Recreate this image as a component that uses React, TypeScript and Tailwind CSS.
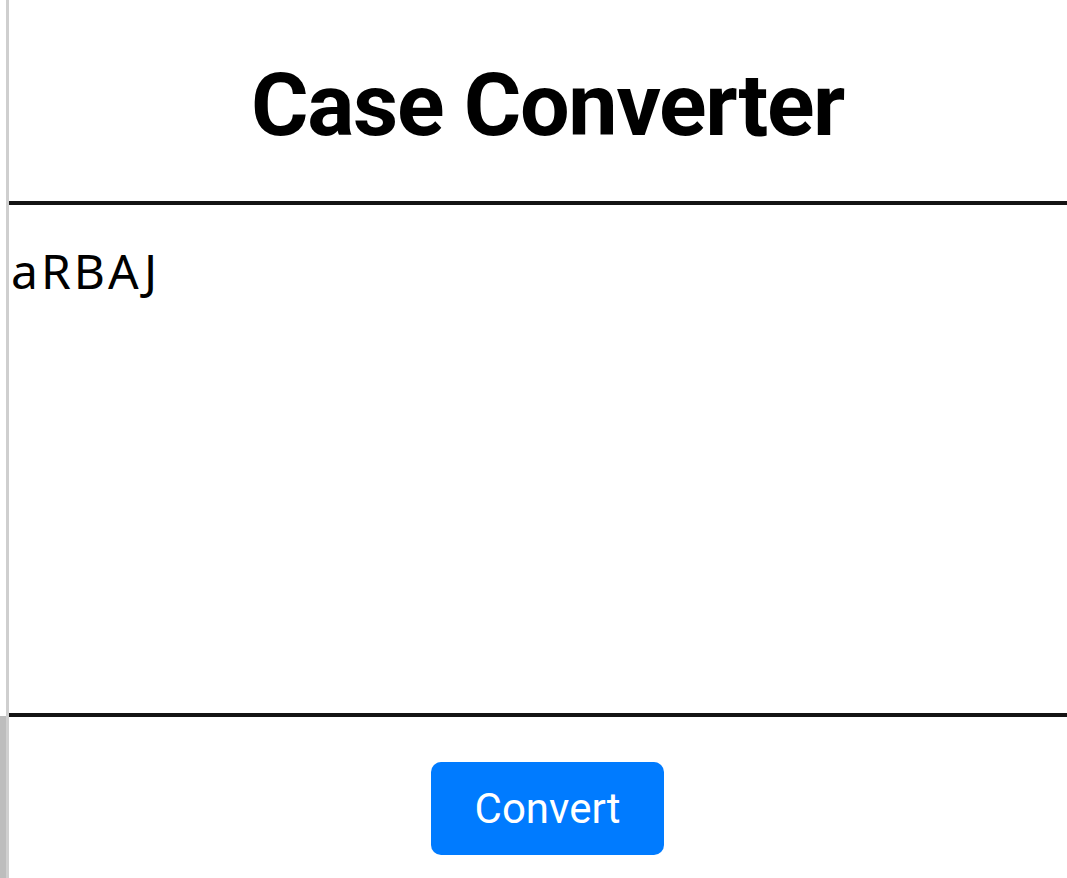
import { useState } from "react";

export default function App() {
  const [text, setText] = useState("aRBAJ");

  return (
    <div className="flex h-[878px] w-[1067px] overflow-hidden bg-white">
      <div className="flex w-[9px] shrink-0 flex-col">
        <div className="flex flex-1">
          <div className="w-[6px]" />
          <div className="w-[3px] bg-[#cfcfcf]" />
        </div>
        <div className="flex h-[162px]">
          <div className="w-[6px] bg-[#bdbdbd]" />
          <div className="w-[3px] bg-[#cfcfcf]" />
        </div>
      </div>
      <div className="flex w-[1077px] shrink-0 flex-col">
        <h1 className="flex h-[201px] items-center justify-center pt-[8px] font-['Roboto',sans-serif] text-[88px] font-bold tracking-[-1.3px] text-black">
          Case Converter
        </h1>
        <textarea
          value={text}
          onChange={(e) => setText(e.target.value)}
          className="h-[516px] resize-none border-y-4 border-[#141414] px-[2px] pt-[37px] font-['Noto_Sans',sans-serif] text-[48px] leading-[1.2] tracking-[3px] text-black outline-none"
        />
        <div className="flex justify-center pt-[45px]">
          <button
            onClick={() => setText(text.toUpperCase())}
            className="h-[93px] w-[233px] rounded-[10px] bg-[#007bff] font-['Roboto',sans-serif] text-[42px] text-white"
          >
            Convert
          </button>
        </div>
      </div>
    </div>
  );
}
